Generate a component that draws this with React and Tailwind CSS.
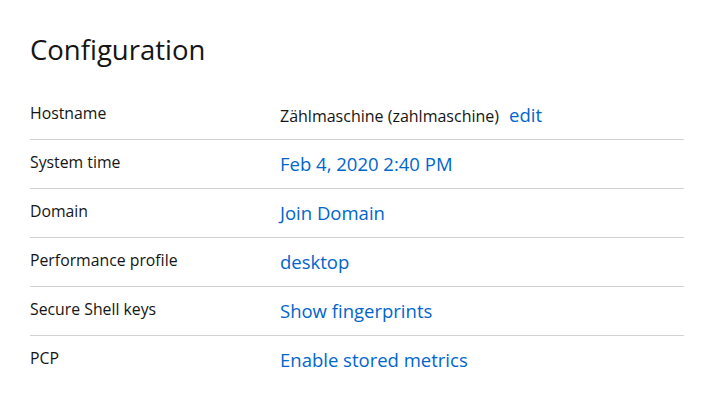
import React from 'react'

const rows = [
  { label: 'Hostname', value: 'Zählmaschine (zahlmaschine)', link: 'edit' },
  { label: 'System time', link: 'Feb 4, 2020 2:40 PM' },
  { label: 'Domain', link: 'Join Domain' },
  { label: 'Performance profile', link: 'desktop' },
  { label: 'Secure Shell keys', link: 'Show fingerprints' },
  { label: 'PCP', link: 'Enable stored metrics' },
]

export default function App() {
  return (
    <div className="h-[413px] w-[713px] bg-white px-[30px] pt-[31px] font-['Open_Sans',sans-serif] text-[#151515]">
      <h1 className="text-[27.5px] font-normal leading-[38px]">Configuration</h1>
      <div className="mt-[22px] w-[654px]">
        {rows.map((row, i) => (
          <div
            key={row.label}
            className={`flex h-[49px] items-start ${i < rows.length - 1 ? 'border-b border-[#d2d2d2]' : ''}`}
          >
            <div className="w-[250px] pt-[11px] text-[15.8px] leading-[22px]">{row.label}</div>
            <div className="flex items-baseline gap-[10px] pt-[12px]">
              {row.value && <span className="text-[16px] leading-[24px]">{row.value}</span>}
              <a href="#" className="text-[18.5px] leading-[24px] text-[#0066cc]">
                {row.link}
              </a>
            </div>
          </div>
        ))}
      </div>
    </div>
  )
}
